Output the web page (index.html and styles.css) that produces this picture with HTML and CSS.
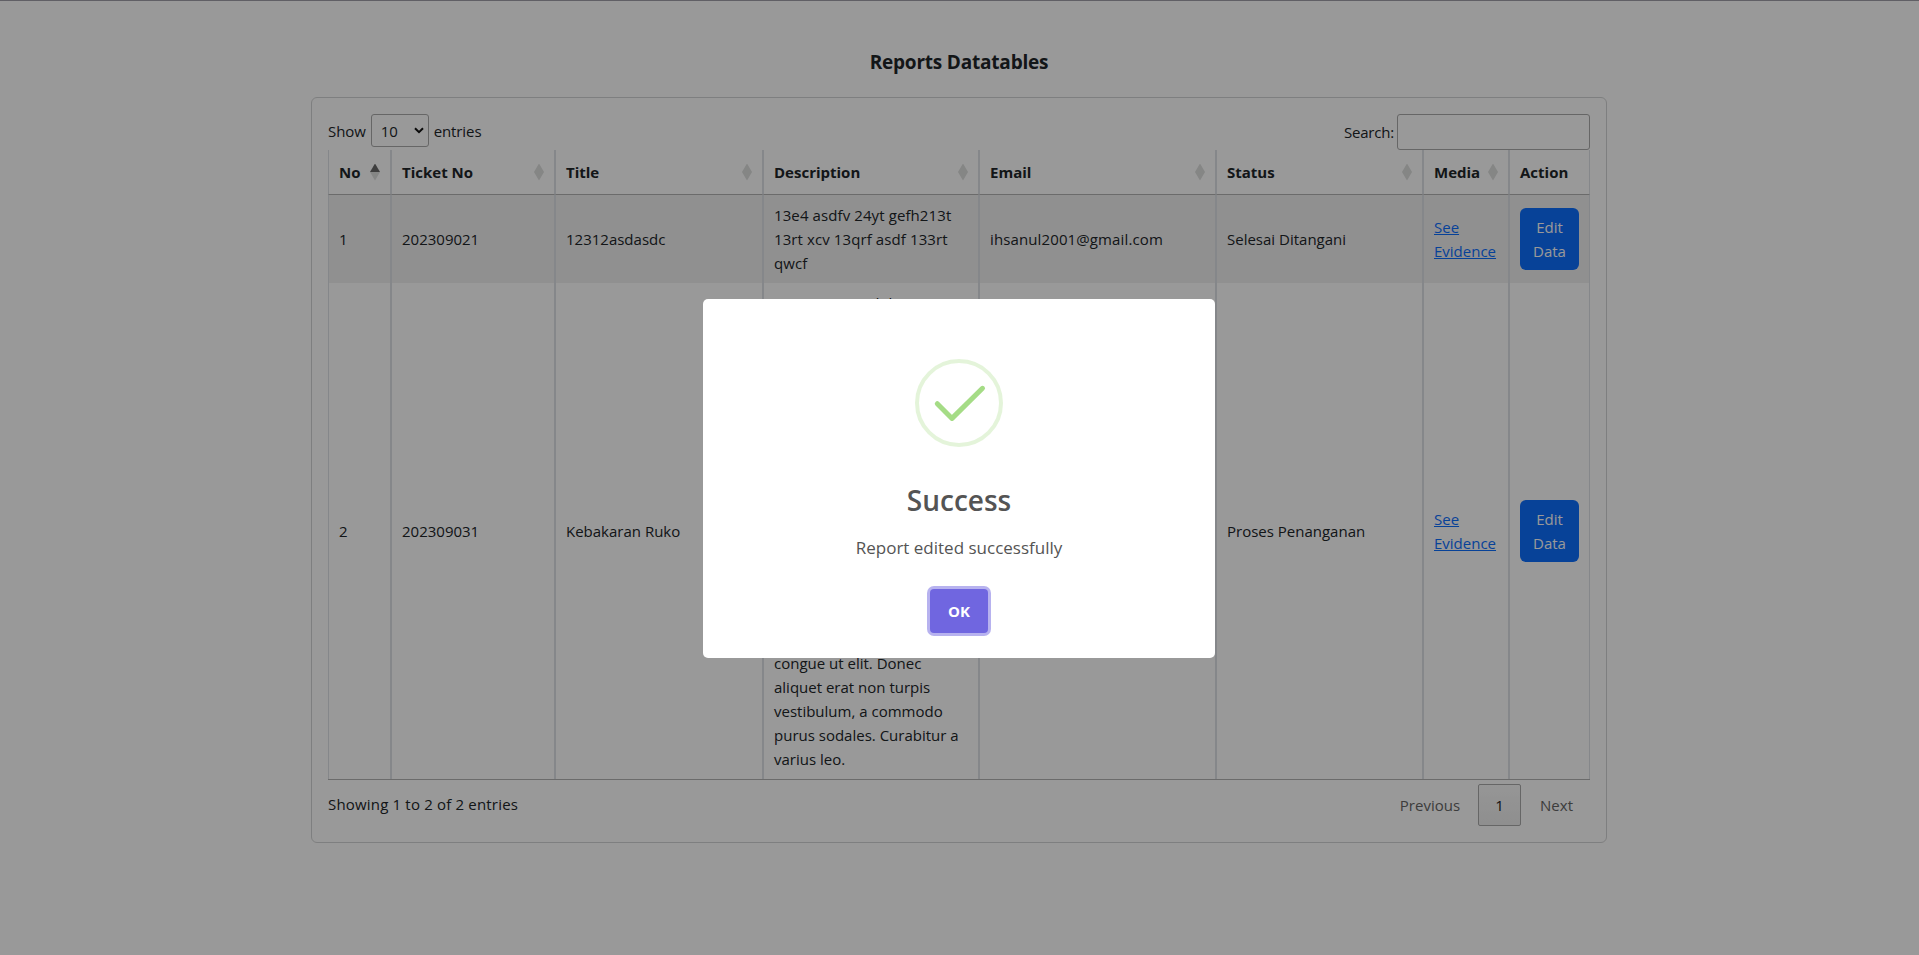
FILE: index.html
```html
<!DOCTYPE html>
<html lang="en">
<head>
<meta charset="utf-8">
<title>Reports Datatables</title>
<link rel="stylesheet" href="styles.css">
</head>
<body>
<main class="container">
  <h1 class="page-title">Reports Datatables</h1>
  <section class="card">
    <div class="toolbar">
      <label class="length">Show
        <span class="select">10<svg width="10" height="7" viewBox="0 0 10 7"><path d="M1 1.2 5 5.2 9 1.2" fill="none" stroke="#111" stroke-width="2"/></svg></span>
        entries</label>
      <label class="search">Search:<input type="text"></label>
    </div>
    <table class="table">
      <colgroup><col class="c1"><col class="c2"><col class="c3"><col class="c4"><col class="c5"><col class="c6"><col class="c7"><col class="c8"></colgroup>
      <thead>
        <tr>
          <th><div class="head">No<i class="sort asc"></i></div></th>
          <th><div class="head">Ticket No<i class="sort"></i></div></th>
          <th><div class="head">Title<i class="sort"></i></div></th>
          <th><div class="head">Description<i class="sort"></i></div></th>
          <th><div class="head">Email<i class="sort"></i></div></th>
          <th><div class="head">Status<i class="sort"></i></div></th>
          <th><div class="head">Media<i class="sort"></i></div></th>
          <th><div class="head">Action</div></th>
        </tr>
      </thead>
      <tbody>
        <tr class="odd">
          <td>1</td><td>202309021</td><td>12312asdasdc</td>
          <td class="description">13e4 asdfv 24yt gefh213t<br>13rt xcv 13qrf asdf 133rt<br>qwcf</td>
          <td class="email">ihsanul2001@gmail.com</td><td>Selesai Ditangani</td>
          <td><a href="#">See<br>Evidence</a></td>
          <td><button class="edit">Edit<br>Data</button></td>
        </tr>
        <tr>
          <td>2</td><td>202309031</td><td>Kebakaran Ruko</td>
          <td>Lorem ipsum dolor sit<br>amet, consectetur<br>adipiscing elit. Nulla<br>facilisi. Sed euismod<br>nunc vel nisl dictum,<br>vitae tempor arcu<br>posuere. Proin at<br>lectus vel massa<br>viverra gravida. Nam<br>sit amet neque nec<br>libero rhoncus<br>tincidunt. Integer id<br>sapien eget turpis<br>efficitur mattis. Ut<br>non magna sed nibh<br>congue ut elit. Donec<br>aliquet erat non turpis<br>vestibulum, a commodo<br>purus sodales. Curabitur a<br>varius leo.</td>
          <td class="email">ihsanul2001@gmail.com</td><td>Proses Penanganan</td>
          <td><a href="#">See<br>Evidence</a></td>
          <td><button class="edit">Edit<br>Data</button></td>
        </tr>
      </tbody>
    </table>
    <div class="footer">
      <div class="info">Showing 1 to 2 of 2 entries</div>
      <nav class="pager"><span class="prev">Previous</span><span class="current">1</span><span class="next">Next</span></nav>
    </div>
  </section>
</main>
<div class="overlay">
  <div class="modal" role="dialog">
    <svg class="check" width="88" height="88" viewBox="0 0 88 88" fill="none">
      <circle cx="44" cy="44" r="42" stroke="#a5dc86" stroke-opacity=".3" stroke-width="4"/>
      <path d="M22.3 44.7 37 59.4 67.5 29.3" stroke="#a5dc86" stroke-width="5" stroke-linecap="round" stroke-linejoin="round"/>
    </svg>
    <h2 class="modal-title">Success</h2>
    <p class="modal-text">Report edited successfully</p>
    <button class="ok">OK</button>
  </div>
</div>
</body>
</html>
```
FILE: styles.css
```css
* { box-sizing: border-box; }
body {
  margin: 0;
  height: 955px;
  overflow: hidden;
  border-top: 1px solid #a09ea8;
  background: #fff;
  color: #212529;
  font: 15px/24px "Open Sans", "Noto Sans", sans-serif;
}
.container { width: 1296px; margin: 0 0 0 311px; padding-top: 48px; }
.page-title { margin: 0; height: 48px; font-size: 19px; line-height: 26px; font-weight: 700; letter-spacing: -.2px; text-align: center; }
.card { height: 746px; padding: 16px; border: 1px solid #d3d4d5; border-radius: 6px; }
.toolbar { display: flex; justify-content: space-between; height: 36px; }
.length { display: flex; align-items: center; gap: 5px; height: 33px; letter-spacing: -.1px; }
.select { display: flex; align-items: center; justify-content: space-between; width: 58px; height: 33px; padding: 0 4px 0 9px; border: 1px solid #aaa; border-radius: 3px; }
.search { display: flex; align-items: center; gap: 3px; height: 36px; letter-spacing: -.2px; }
.search input { width: 193px; height: 36px; border: 1px solid #aaa; border-radius: 3px; background: transparent; }
.table { width: 1262px; table-layout: fixed; border-collapse: separate; border-spacing: 0; border-bottom: 1px solid #b3b3b3; }
.c1 { width: 63px; }
.c2 { width: 164px; }
.c3 { width: 208px; }
.c4 { width: 216px; }
.c5 { width: 237px; }
.c6 { width: 207px; }
.c7 { width: 86px; }
.c8 { width: 81px; }
th, td { border: solid #dee2e6; border-width: 0 1px; padding: 8px 10px; text-align: left; vertical-align: middle; white-space: nowrap; }
th { padding: 10px; border-bottom: 1px solid #b3b3b3; font-weight: 700; }
.head { display: flex; align-items: center; justify-content: space-between; height: 24px; }
.sort { width: 10px; height: 17px; background: #dedfde; clip-path: polygon(50% 0, 100% 50%, 50% 100%, 0 50%); }
.sort.asc { background: linear-gradient(#686868 50%, #dedfde 50%); }
.odd td { background: #f1f1f1; }
.odd .description { letter-spacing: .1px; }
.email { letter-spacing: .12px; }
a { color: #0d6efd; text-decoration: underline; }
.edit { display: block; width: 59px; height: 62px; padding: 0; border: 0; border-radius: 6px; background: #0d6efd; color: #fff; font: inherit; }
.footer { display: flex; justify-content: space-between; padding-top: 4px; }
.info { padding-top: 8px; letter-spacing: .18px; }
.pager { display: flex; height: 42px; line-height: 42px; color: #666; }
.prev { margin-right: 18px; }
.current { width: 43px; border: 1px solid #aaa; border-radius: 2px; background: linear-gradient(#fafafa, #eee); color: #222; line-height: 40px; text-align: center; }
.next { margin: 0 17px 0 19px; }
.overlay { position: fixed; inset: 0; display: flex; align-items: center; justify-content: center; padding-right: 1px; background: rgba(0,0,0,.4); }
.modal { display: flex; flex-direction: column; align-items: center; width: 512px; height: 359px; margin-top: 2px; padding-top: 60px; border-radius: 5px; background: #fff; color: #545454; }
.modal-title { margin: 32px 0 0; font-size: 28px; line-height: 42px; font-weight: 600; }
.modal-text { margin: 14px 0 0; font-size: 17px; line-height: 26px; }
.ok { width: 58px; height: 44px; margin-top: 28px; padding: 0; border: 0; border-radius: 4px; background: #7066e0; box-shadow: 0 0 0 3px rgba(112,102,224,.5); color: #fff; font: 700 15px "Open Sans", sans-serif; }
```
